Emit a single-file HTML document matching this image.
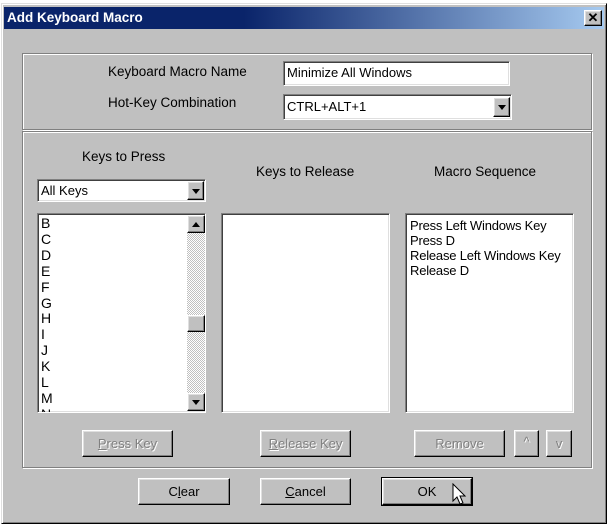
<!DOCTYPE html>
<html><head><style>
body{margin:0;width:609px;height:526px;background:#fff;position:relative;overflow:hidden;font-family:"Liberation Sans",Arial,sans-serif;font-size:13px;color:#000}
.a{position:absolute}
.win{left:1px;top:3px;width:604px;height:519px;background:#c0c0c0;border:1px solid;border-color:#dfdfdf #000 #000 #dfdfdf;box-shadow:inset 1px 1px #fff,inset -1px -1px #808080}
.title{left:4px;top:7px;width:600px;height:22px;background:linear-gradient(90deg,#0a246a 0%,#0a246a 40%,#a6caf0 100%);color:#fff;font-weight:bold;font-size:13.5px;line-height:22px}
.grp{border:1px solid #808080;box-shadow:1px 1px #fff,inset 1px 1px #fff}
.sunk{background:#fff;border:1px solid;border-color:#808080 #fff #fff #808080;box-shadow:inset 1px 1px #404040,inset -1px -1px #dfdfdf}
.btn{background:#c0c0c0;border:1px solid;border-color:#fff #000 #000 #fff;box-shadow:inset -1px -1px #808080,inset 1px 1px #dfdfdf;text-align:center;box-sizing:border-box}
.dis{color:#808080;text-shadow:1px 1px #fff}
.arr{width:0;height:0;border-left:4px solid transparent;border-right:4px solid transparent}
</style></head><body>
<div class="a win"></div>
<div class="a title"><span style="padding-left:3px">Add Keyboard Macro</span></div>
<div class="a btn" style="left:584px;top:10px;width:18px;height:16px;font-weight:bold;font-size:13px;line-height:14px">✕</div>

<div class="a grp" style="left:22px;top:53px;width:568px;height:75px"></div>
<div class="a" style="left:108px;top:64px;font-size:13.5px">Keyboard Macro Name</div>
<div class="a" style="left:108px;top:95px;font-size:13.5px">Hot-Key Combination</div>
<div class="a sunk" style="left:283px;top:61px;width:227px;height:25px;box-sizing:border-box;padding:3px 3px;font-size:13px">Minimize All Windows</div>
<div class="a sunk" style="left:283px;top:94px;width:229px;height:26px;box-sizing:border-box;padding:4px 3px;font-size:13px">CTRL+ALT+1</div>
<div class="a btn" style="left:493px;top:97px;width:17px;height:20px"><div class="arr" style="margin:7px 0 0 4px;border-top:5px solid #000"></div></div>

<div class="a grp" style="left:22px;top:131px;width:568px;height:335px"></div>
<div class="a" style="left:82px;top:149px;font-size:13.5px">Keys to Press</div>
<div class="a" style="left:256px;top:164px;font-size:13.5px">Keys to Release</div>
<div class="a" style="left:434px;top:164px;font-size:13.5px">Macro Sequence</div>

<div class="a sunk" style="left:37px;top:179px;width:169px;height:23px;box-sizing:border-box;padding:3px 3px">All Keys</div>
<div class="a btn" style="left:187px;top:181px;width:17px;height:19px"><div class="arr" style="margin:7px 0 0 4px;border-top:5px solid #000"></div></div>

<div class="a sunk" style="left:37px;top:213px;width:169px;height:200px;box-sizing:border-box;overflow:hidden;padding:2px 0 0 3px;line-height:15.9px;font-size:14px">B<br>C<br>D<br>E<br>F<br>G<br>H<br>I<br>J<br>K<br>L<br>M<br>N</div>
<div class="a" style="left:187px;top:215px;width:18px;height:196px;background:repeating-conic-gradient(#fff 0 25%,#c0c0c0 0 50%) 0 0/2px 2px"></div>
<div class="a btn" style="left:187px;top:215px;width:18px;height:18px"><div class="arr" style="margin:6px 0 0 4px;border-bottom:5px solid #000"></div></div>
<div class="a btn" style="left:187px;top:315px;width:18px;height:17px"></div>
<div class="a btn" style="left:187px;top:393px;width:18px;height:18px"><div class="arr" style="margin:6px 0 0 4px;border-top:5px solid #000"></div></div>

<div class="a sunk" style="left:221px;top:213px;width:169px;height:200px;box-sizing:border-box"></div>
<div class="a sunk" style="left:405px;top:213px;width:169px;height:200px;box-sizing:border-box;padding:4px 0 0 4px;line-height:15px;font-size:13px;letter-spacing:-0.2px">Press Left Windows Key<br>Press D<br>Release Left Windows Key<br>Release D</div>

<div class="a btn dis" style="left:82px;top:430px;width:91px;height:27px;line-height:25px"><u>P</u>ress Key</div>
<div class="a btn dis" style="left:260px;top:430px;width:91px;height:27px;line-height:25px"><u>R</u>elease Key</div>
<div class="a btn dis" style="left:414px;top:430px;width:91px;height:27px;line-height:25px">Remove</div>
<div class="a btn dis" style="left:514px;top:430px;width:25px;height:27px;line-height:22px">^</div>
<div class="a btn dis" style="left:546px;top:430px;width:26px;height:27px;line-height:25px">v</div>

<div class="a btn" style="left:138px;top:478px;width:92px;height:27px;line-height:25px">C<u>l</u>ear</div>
<div class="a btn" style="left:260px;top:478px;width:91px;height:27px;line-height:25px"><u>C</u>ancel</div>
<div class="a" style="left:381px;top:477px;width:92px;height:29px;border:1px solid #000;box-sizing:border-box"></div>
<div class="a btn" style="left:382px;top:478px;width:90px;height:27px;line-height:25px">OK</div>
<svg class="a" style="left:452px;top:483px" width="16" height="26" viewBox="0 0 16 26"><path d="M1 1 L1 18 L5 14 L8 21 L11 20 L8 13 L13 13 Z" fill="#fff" stroke="#000" stroke-width="1"/></svg>
</body></html>
